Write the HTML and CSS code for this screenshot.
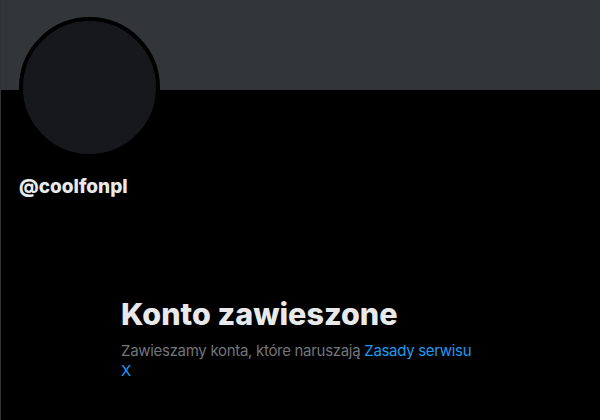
FILE: index.html
```html
<!DOCTYPE html>
<html lang="pl">
<head>
    <meta charset="UTF-8">
    <meta name="viewport" content="width=device-width, initial-scale=1.0">
    <title>@coolfonpl / X</title>
    <link rel="stylesheet" href="styles.css">
</head>
<body>

    <main class="profile">
        <div class="banner"></div>

        <div class="profile-head">
            <div class="avatar"></div>
            <div class="handle">@coolfonpl</div>
        </div>

        <section class="empty-state">
            <h2>Konto zawieszone</h2>
            <p>Zawieszamy konta, które naruszają <a href="#">Zasady serwisu X</a></p>
        </section>
    </main>

</body>
</html>
```

FILE: styles.css
```css
body {
    margin: 0;
    background-color: #000;
    color: #e7e9ea;
    font-family: Inter, "Noto Sans", sans-serif;
}
.profile {
    min-height: 420px;
    border-left: 1px solid #2f3336;
}
.banner {
    height: 90px;
    background-color: #333639;
}
.profile-head {
    padding: 0 18px;
}
.avatar {
    width: 133px;
    height: 133px;
    margin-top: -73px;
    border: 4px solid #000;
    border-radius: 50%;
    background-color: #16181c;
}
.handle {
    margin-top: 17px;
    font-size: 19px;
    font-weight: 800;
    line-height: 24px;
}
.empty-state {
    max-width: 358px;
    margin: 97px 0 0 120px;
}
.empty-state h2 {
    margin: 0 0 9px;
    font-size: 30.5px;
    font-weight: 800;
    line-height: 36px;
}
.empty-state p {
    margin: 0;
    font-size: 15px;
    line-height: 20px;
    letter-spacing: -0.3px;
    color: #71767b;
}
.empty-state a {
    color: #1d9bf0;
    text-decoration: none;
}
```
